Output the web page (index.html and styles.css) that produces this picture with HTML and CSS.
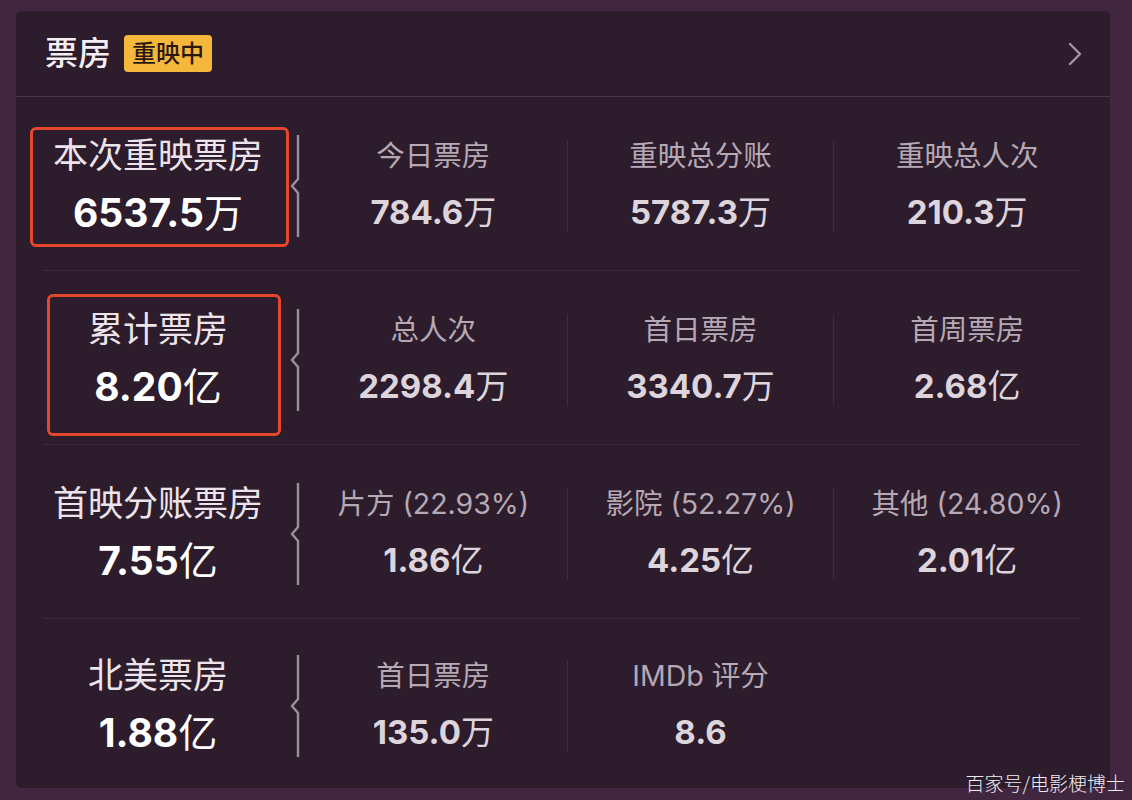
FILE: index.html
```html
<!DOCTYPE html>
<html lang="zh-CN">
<head>
  <meta charset="UTF-8">
  <title>票房</title>
  <link rel="stylesheet" href="styles.css">
</head>
<body>

<div class="card">
  <div class="card-head">
    <span class="title">票房</span>
    <span class="badge">重映中</span>
    <svg class="chevron" width="14" height="24" viewBox="0 0 14 24">
      <path d="M2 2 L12 12 L2 22" fill="none" stroke="#a595a4" stroke-width="2.4" stroke-linecap="round" stroke-linejoin="round"/>
    </svg>
  </div>

  <div class="row">
    <div class="mark mark-one"></div>
    <div class="lead">
      <div class="lead-label">本次重映票房</div>
      <div class="lead-value">6537.5<span class="unit">万</span></div>
    </div>
    <svg class="brace" width="10" height="102" viewBox="0 0 10 102">
      <path d="M8 0 V44 L2 51 L8 58 V102" fill="none" stroke="#9d8e9c" stroke-width="2.4"/>
    </svg>
    <div class="stats">
      <div class="stat">
        <div class="stat-label">今日票房</div>
        <div class="stat-value">784.6<span class="unit">万</span></div>
      </div>
      <div class="stat">
        <div class="stat-label">重映总分账</div>
        <div class="stat-value">5787.3<span class="unit">万</span></div>
      </div>
      <div class="stat">
        <div class="stat-label">重映总人次</div>
        <div class="stat-value">210.3<span class="unit">万</span></div>
      </div>
    </div>
  </div>

  <div class="row">
    <div class="mark mark-two"></div>
    <div class="lead">
      <div class="lead-label">累计票房</div>
      <div class="lead-value">8.20<span class="unit">亿</span></div>
    </div>
    <svg class="brace" width="10" height="102" viewBox="0 0 10 102">
      <path d="M8 0 V44 L2 51 L8 58 V102" fill="none" stroke="#9d8e9c" stroke-width="2.4"/>
    </svg>
    <div class="stats">
      <div class="stat">
        <div class="stat-label">总人次</div>
        <div class="stat-value">2298.4<span class="unit">万</span></div>
      </div>
      <div class="stat">
        <div class="stat-label">首日票房</div>
        <div class="stat-value">3340.7<span class="unit">万</span></div>
      </div>
      <div class="stat">
        <div class="stat-label">首周票房</div>
        <div class="stat-value">2.68<span class="unit">亿</span></div>
      </div>
    </div>
  </div>

  <div class="row">
    <div class="lead">
      <div class="lead-label">首映分账票房</div>
      <div class="lead-value">7.55<span class="unit">亿</span></div>
    </div>
    <svg class="brace" width="10" height="102" viewBox="0 0 10 102">
      <path d="M8 0 V44 L2 51 L8 58 V102" fill="none" stroke="#9d8e9c" stroke-width="2.4"/>
    </svg>
    <div class="stats">
      <div class="stat">
        <div class="stat-label">片方 (22.93%)</div>
        <div class="stat-value">1.86<span class="unit">亿</span></div>
      </div>
      <div class="stat">
        <div class="stat-label">影院 (52.27%)</div>
        <div class="stat-value">4.25<span class="unit">亿</span></div>
      </div>
      <div class="stat">
        <div class="stat-label">其他 (24.80%)</div>
        <div class="stat-value">2.01<span class="unit">亿</span></div>
      </div>
    </div>
  </div>

  <div class="row last">
    <div class="lead">
      <div class="lead-label">北美票房</div>
      <div class="lead-value">1.88<span class="unit">亿</span></div>
    </div>
    <svg class="brace" width="10" height="102" viewBox="0 0 10 102">
      <path d="M8 0 V44 L2 51 L8 58 V102" fill="none" stroke="#9d8e9c" stroke-width="2.4"/>
    </svg>
    <div class="stats">
      <div class="stat">
        <div class="stat-label">首日票房</div>
        <div class="stat-value">135.0<span class="unit">万</span></div>
      </div>
      <div class="stat">
        <div class="stat-label">IMDb 评分</div>
        <div class="stat-value">8.6</div>
      </div>
      <div class="stat empty"></div>
    </div>
  </div>
</div>

<div class="watermark">百家号/电影梗博士</div>

</body>
</html>
```

FILE: styles.css
```css
body {
  margin: 0;
  background: #40263f;
  font-family: Inter, "Noto Sans CJK SC", sans-serif;
  height: 800px;
  position: relative;
  overflow: hidden;
}

.card {
  margin: 11px 0 0 16px;
  width: 1094px;
  height: 777px;
  background: #2c1c2c;
  border-radius: 6px;
}

/* header */
.card-head {
  height: 85px;
  display: flex;
  align-items: center;
  padding: 0 28px 0 29px;
  border-bottom: 1px solid #4a3447;
}

.title {
  color: #f4eef3;
  font-size: 33px;
  font-weight: 500;
  line-height: 1;
}

.badge {
  margin-left: 13px;
  background: #f5b73c;
  color: #2a1810;
  font-size: 24px;
  font-weight: 500;
  line-height: 37px;
  padding: 0 8px;
  border-radius: 4px;
}

.chevron {
  margin-left: auto;
}

/* rows */
.row {
  position: relative;
  height: 174px;
  box-sizing: border-box;
  padding-top: 5px;
  display: flex;
  align-items: center;
  margin: 0 30px 0 0;
  border-bottom: 1px solid #3b2a3a;
  border-image: linear-gradient(to right, transparent 28px, #3b2a3a 28px) 1;
}

.row.last {
  border-bottom: none;
  height: 169px;
}

.lead {
  flex: 0 0 268px;
  padding-left: 8px;
  text-align: center;
}

.lead-label {
  color: #ece4ea;
  font-size: 35px;
  line-height: 36px;
}

.lead-value {
  margin-top: 18px;
  color: #ffffff;
  font-size: 39px;
  font-weight: 700;
  line-height: 44px;
}

.brace {
  flex: 0 0 10px;
  margin-left: -2px;
}

.stats {
  flex: 0 0 800px;
  margin-right: -20px;
  display: grid;
  grid-template-columns: repeat(3, 1fr);
}

.stat {
  text-align: center;
}

.stat + .stat {
  border-left: 1px solid #3e2e3d;
}

.stat.empty {
  border-left: none;
}

.stat-label {
  color: #b6a8b4;
  font-size: 28.5px;
  line-height: 32px;
}

.stat-value {
  margin-top: 20px;
  color: #ded4dc;
  font-size: 33px;
  font-weight: 700;
  line-height: 40px;
}

.unit {
  font-weight: 400;
}

/* red annotation boxes */
.mark {
  position: absolute;
  border: 3px solid #e5472d;
  border-radius: 6px;
}

.mark-one {
  left: 14px;
  top: 30px;
  width: 253px;
  height: 114px;
}

.mark-two {
  left: 31px;
  top: 23px;
  width: 228px;
  height: 136px;
}

.watermark {
  position: absolute;
  right: 7px;
  bottom: 4px;
  color: #f2ecf1;
  font-family: "Noto Sans CJK SC", sans-serif;
  font-weight: 300;
  font-size: 19px;
}
```
